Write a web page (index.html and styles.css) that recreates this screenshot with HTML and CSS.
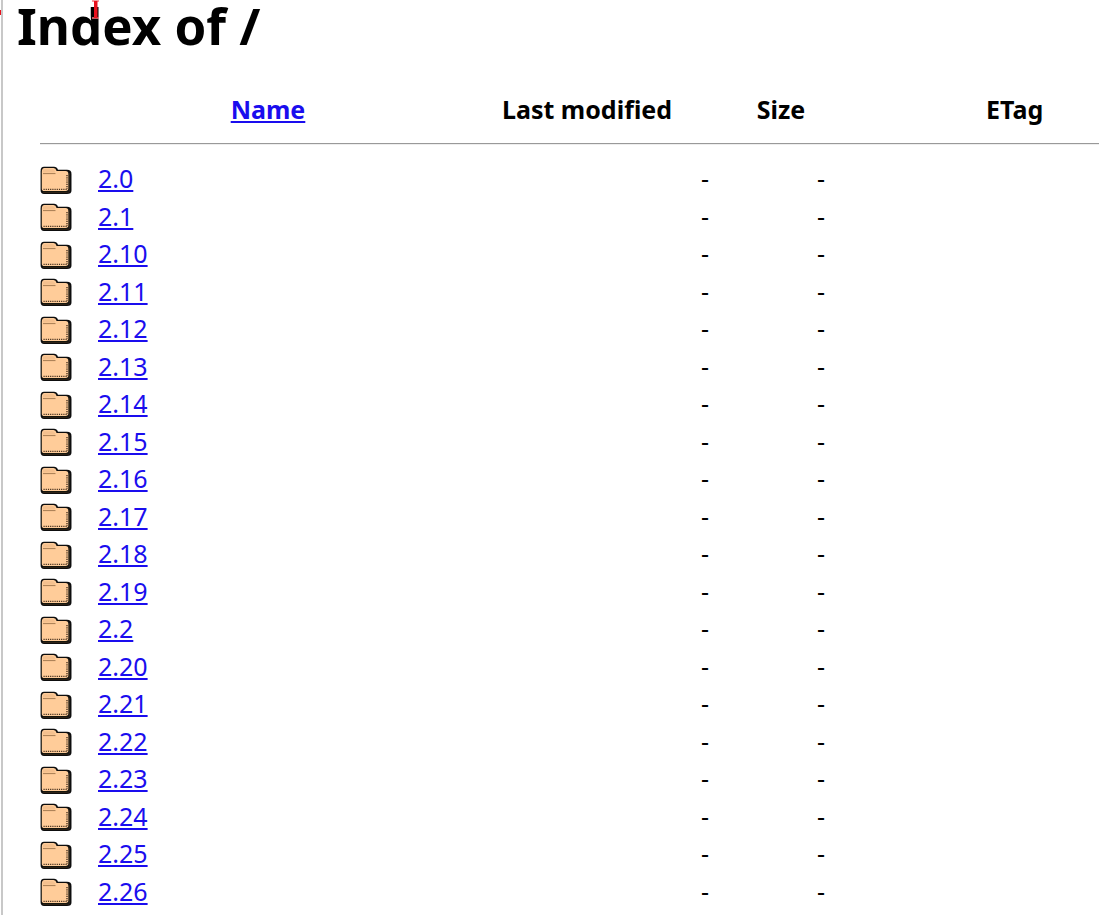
FILE: index.html
```html
<!DOCTYPE html>
<html lang="en">
<head>
<meta charset="utf-8">
<title>Index of /</title>
<link rel="stylesheet" href="styles.css">
</head>
<body>
<svg width="0" height="0" class="defs" aria-hidden="true">
  <defs>
    <filter id="soft" x="-5%" y="-5%" width="110%" height="110%">
      <feGaussianBlur stdDeviation="0.35"/>
    </filter>
  </defs>
  <symbol id="folder" viewBox="0 0 32 28">
    <g filter="url(#soft)">
      <path d="M0.6 5 Q0.6 0.8 4 0.8 H14 Q17 0.8 18 3.8 H27 Q31.5 3.8 31.5 8 V24.5 Q31.5 28 27 28 H4 Q0.6 28 0.6 24 Z" fill="#111"/>
      <path d="M1.8 6 Q1.8 2 4.5 2 H13.5 Q15.8 2 16.6 5 H25.5 Q28.4 5 28.4 8 V22.6 Q28.4 25 25.5 25 H4.4 Q1.8 25 1.8 22.4 Z" fill="#ffcc99"/>
      <path d="M3 4.6 Q3 3.2 5 3.2 H13 Q14.6 3.2 15.2 6 V6.6 H3 Z" fill="#f4c08e"/>
      <path d="M3 7.6 H15.5" stroke="#a67c52" stroke-width="1" fill="none"/>
      <path d="M3.5 23.4 H27.6 M27 9 V23" stroke="#4a3420" stroke-width="1.4" stroke-dasharray="1.2 1" fill="none"/>
      <path d="M29.3 7 V25.6 Q29.3 26.4 27.5 26.4 H3" stroke="#3a2c1c" stroke-width="0.8" fill="none"/>
    </g>
  </symbol>
</svg>
<div class="edge-mark"></div>
<svg class="cursor" width="10" height="20" viewBox="0 0 10 20" aria-hidden="true">
  <path d="M1 1 H8 M1 18 H8" stroke="#f47a80" stroke-width="1.4" fill="none"/>
  <path d="M3 1 H6.5 V18 H3 Z" fill="#e8101c"/>
</svg>
<main class="page">
  <h1>Index of /</h1>
  <table>
    <colgroup>
      <col class="c-icon"><col class="c-name"><col class="c-date"><col class="c-size"><col class="c-etag">
    </colgroup>
    <thead>
      <tr class="head">
        <th></th>
        <th class="h-name"><a href="#">Name</a></th>
        <th>Last modified</th>
        <th class="h-size">Size</th>
        <th class="h-etag">ETag</th>
      </tr>
      <tr class="rule"><th colspan="5"><hr></th></tr>
    </thead>
    <tbody id="rows">
      <tr><td><svg class="ico"><use href="#folder"/></svg></td><td><a href="#">2.0</a></td><td class="r">-</td><td class="r">-</td><td></td></tr>
      <tr><td><svg class="ico"><use href="#folder"/></svg></td><td><a href="#">2.1</a></td><td class="r">-</td><td class="r">-</td><td></td></tr>
      <tr><td><svg class="ico"><use href="#folder"/></svg></td><td><a href="#">2.10</a></td><td class="r">-</td><td class="r">-</td><td></td></tr>
      <tr><td><svg class="ico"><use href="#folder"/></svg></td><td><a href="#">2.11</a></td><td class="r">-</td><td class="r">-</td><td></td></tr>
      <tr><td><svg class="ico"><use href="#folder"/></svg></td><td><a href="#">2.12</a></td><td class="r">-</td><td class="r">-</td><td></td></tr>
      <tr><td><svg class="ico"><use href="#folder"/></svg></td><td><a href="#">2.13</a></td><td class="r">-</td><td class="r">-</td><td></td></tr>
      <tr><td><svg class="ico"><use href="#folder"/></svg></td><td><a href="#">2.14</a></td><td class="r">-</td><td class="r">-</td><td></td></tr>
      <tr><td><svg class="ico"><use href="#folder"/></svg></td><td><a href="#">2.15</a></td><td class="r">-</td><td class="r">-</td><td></td></tr>
      <tr><td><svg class="ico"><use href="#folder"/></svg></td><td><a href="#">2.16</a></td><td class="r">-</td><td class="r">-</td><td></td></tr>
      <tr><td><svg class="ico"><use href="#folder"/></svg></td><td><a href="#">2.17</a></td><td class="r">-</td><td class="r">-</td><td></td></tr>
      <tr><td><svg class="ico"><use href="#folder"/></svg></td><td><a href="#">2.18</a></td><td class="r">-</td><td class="r">-</td><td></td></tr>
      <tr><td><svg class="ico"><use href="#folder"/></svg></td><td><a href="#">2.19</a></td><td class="r">-</td><td class="r">-</td><td></td></tr>
      <tr><td><svg class="ico"><use href="#folder"/></svg></td><td><a href="#">2.2</a></td><td class="r">-</td><td class="r">-</td><td></td></tr>
      <tr><td><svg class="ico"><use href="#folder"/></svg></td><td><a href="#">2.20</a></td><td class="r">-</td><td class="r">-</td><td></td></tr>
      <tr><td><svg class="ico"><use href="#folder"/></svg></td><td><a href="#">2.21</a></td><td class="r">-</td><td class="r">-</td><td></td></tr>
      <tr><td><svg class="ico"><use href="#folder"/></svg></td><td><a href="#">2.22</a></td><td class="r">-</td><td class="r">-</td><td></td></tr>
      <tr><td><svg class="ico"><use href="#folder"/></svg></td><td><a href="#">2.23</a></td><td class="r">-</td><td class="r">-</td><td></td></tr>
      <tr><td><svg class="ico"><use href="#folder"/></svg></td><td><a href="#">2.24</a></td><td class="r">-</td><td class="r">-</td><td></td></tr>
      <tr><td><svg class="ico"><use href="#folder"/></svg></td><td><a href="#">2.25</a></td><td class="r">-</td><td class="r">-</td><td></td></tr>
      <tr><td><svg class="ico"><use href="#folder"/></svg></td><td><a href="#">2.26</a></td><td class="r">-</td><td class="r">-</td><td></td></tr>
    </tbody>
  </table>
</main>
</body>
</html>
```
FILE: styles.css
```css
html, body {
  margin: 0;
  height: 915px;
  overflow: hidden;
  background: #fff;
}
body {
  font-family: "Noto Sans", "Open Sans", sans-serif;
  font-size: 25px;
  color: #000;
}
.defs { position: absolute; }
.page {
  margin-left: 1px;
  border-left: 2px solid #c8c8c8;
  padding-left: 14px;
  height: 915px;
}
.edge-mark {
  position: absolute;
  left: 0;
  top: 10px;
  width: 1px;
  height: 5px;
  background: #e8101c;
}
.cursor {
  position: absolute;
  left: 91px;
  top: 0;
}
h1 {
  margin: 0;
  font-size: 51px;
  line-height: 50px;
  font-weight: 700;
}
table {
  margin: 35px 0 0 23px;
  border-collapse: separate;
  border-spacing: 0;
  table-layout: fixed;
  width: 1059px;
}
.c-icon { width: 58px; }
.c-name { width: 367px; }
.c-date { width: 244px; }
.c-size { width: 116px; }
.c-etag { width: 274px; }
th, td { padding: 0; line-height: 37.5px; }
td { height: 37.5px; }
th { font-weight: 700; }
.head th { height: 49px; line-height: 49px; }
.h-name { padding-right: 27px; }
.h-size { padding-left: 28px; }
.h-etag { padding-left: 161px; text-align: left; }
.rule th { height: 26px; vertical-align: top; line-height: 0; }
hr {
  margin: 9px 0 0;
  height: 0;
  border: 0;
  border-top: 1px solid #999;
  border-bottom: 1px solid #eee;
}
a { color: #1a0dee; text-decoration: underline; }
.r { text-align: right; }
.ico { display: block; width: 32px; height: 28px; position: relative; top: 1px; }
```
